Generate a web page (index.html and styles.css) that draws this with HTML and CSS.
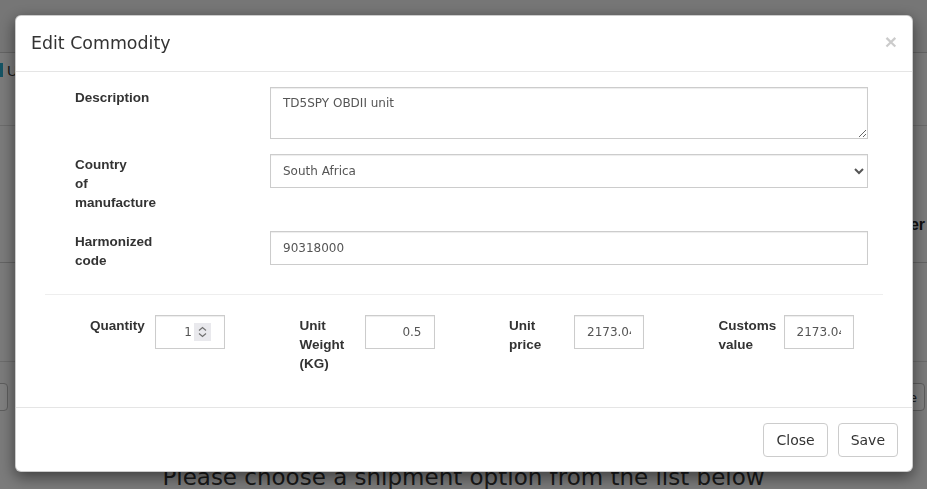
FILE: index.html
```html
<!DOCTYPE html>
<html lang="en">
<head>
<meta charset="utf-8">
<title>Edit Commodity</title>
<link rel="stylesheet" href="styles.css">
</head>
<body>
<div class="page">
  <div class="topbar"></div>
  <div class="toolbar"><span class="tb-mark"></span><span class="tb-text">Upload</span></div>
  <div class="panel"><span class="panel-title">Order Number</span></div>
  <div class="panel2"></div>
  <div class="actions">
    <button class="pbtn pbtn-left" aria-label="Back"></button>
    <button class="pbtn pbtn-right">Continue</button>
  </div>
  <div class="prompt">Please choose a shipment option from the list below</div>
</div>

<div class="overlay">
  <div class="modal">
    <div class="modal-header">
      <h4 class="modal-title">Edit Commodity</h4>
      <button class="close" type="button">×</button>
    </div>
    <div class="modal-body">
      <div class="form">
        <div class="row">
          <label class="lbl">Description</label>
          <textarea class="ctl ctl-area">TD5SPY OBDII unit</textarea>
        </div>
        <div class="row">
          <label class="lbl">Country of manufacture</label>
          <select class="ctl ctl-select"><option>South Africa</option></select>
        </div>
        <div class="row">
          <label class="lbl">Harmonized code</label>
          <input class="ctl" type="text" value="90318000">
        </div>
        <hr class="divider">
        <div class="grid4">
          <div class="group">
            <label class="lbl lbl-sm">Quantity</label>
            <div class="ctl ctl-num ctl-qty">
              <input class="qty-input" type="text" value="1">
              <span class="spin">
                <svg width="17" height="18" viewBox="0 0 17 18"><rect width="17" height="18" fill="#e9e9ed"/><path d="M5 7.5 L8.5 4.5 L12 7.5" fill="none" stroke="#707070" stroke-width="1.2"/><path d="M5 10.5 L8.5 13.5 L12 10.5" fill="none" stroke="#707070" stroke-width="1.2"/></svg>
              </span>
            </div>
          </div>
          <div class="group">
            <label class="lbl lbl-sm">Unit Weight (KG)</label>
            <input class="ctl ctl-num" type="text" value="0.5">
          </div>
          <div class="group">
            <label class="lbl lbl-sm">Unit price</label>
            <input class="ctl ctl-num ctl-over" type="text" value="2173.04">
          </div>
          <div class="group">
            <label class="lbl lbl-sm">Customs value</label>
            <input class="ctl ctl-num ctl-over" type="text" value="2173.04">
          </div>
        </div>
      </div>
    </div>
    <div class="modal-footer">
      <button class="btn" type="button">Close</button>
      <button class="btn" type="button">Save</button>
    </div>
  </div>
</div>
</body>
</html>
```
FILE: styles.css
```css
html, body {
  margin: 0;
  padding: 0;
  height: 100%;
  overflow: hidden;
}
body {
  font-family: "DejaVu Sans", sans-serif;
  background: #f6f6f6;
  color: #333;
}

/* ---------- background page ---------- */
.page {
  width: 927px;
}
.topbar {
  height: 52px;
  background: #ececec;
  border-bottom: 1px solid #c8c8c8;
}
.toolbar {
  height: 73px;
  border-bottom: 1px solid #d8d8d8;
  display: flex;
  align-items: center;
  box-sizing: border-box;
  gap: 4px;
  padding-bottom: 38px;
}
.tb-mark {
  width: 3px;
  height: 14px;
  background: #2aa7c9;
}
.tb-text {
  font-family: "Liberation Sans", sans-serif;
  font-size: 15px;
  color: #333;
}
.panel {
  height: 137px;
  border-bottom: 1px solid #c8c8c8;
  display: flex;
  justify-content: flex-end;
  align-items: center;
  box-sizing: border-box;
  padding-top: 62px;
  padding-right: 2px;
}
.panel-title {
  font-family: "Liberation Sans", sans-serif;
  font-weight: bold;
  font-size: 16px;
  color: #222;
}
.panel2 {
  height: 98px;
  border-bottom: 1px solid #d8d8d8;
}
.actions {
  margin-top: 21px;
  display: flex;
  justify-content: space-between;
}
.pbtn {
  height: 28px;
  font-family: "DejaVu Sans", sans-serif;
  font-size: 13px;
  background: #fff;
  border: 1px solid #bbb;
  border-radius: 4px;
  color: #333;
  padding: 0 7px;
}
.pbtn-left {
  width: 48px;
  margin-left: -40px;
}
.pbtn-right {
  margin-right: 2px;
}
.prompt {
  margin-top: 52px;
  text-align: center;
  font-size: 23px;
  line-height: 28px;
  color: #333;
}

/* ---------- modal ---------- */
.overlay {
  position: fixed;
  inset: 0;
  background: rgba(0, 0, 0, 0.5);
}
.modal {
  margin: 15px 0 0 15px;
  width: 898px;
  box-sizing: border-box;
  background: #fff;
  border: 1px solid rgba(0, 0, 0, 0.2);
  border-radius: 6px;
  box-shadow: 0 5px 15px rgba(0, 0, 0, 0.5);
}
.modal-header {
  display: flex;
  justify-content: space-between;
  align-items: flex-start;
  padding: 15px;
  border-bottom: 1px solid #e5e5e5;
}
.modal-title {
  margin: 0;
  font-weight: normal;
  font-size: 17.4px;
  line-height: 25px;
  color: #333;
}
.close {
  border: 0;
  background: none;
  padding: 0;
  margin-top: 0;
  font-family: "Liberation Sans", sans-serif;
  font-weight: bold;
  font-size: 21px;
  line-height: 21px;
  color: #000;
  opacity: 0.2;
}
.modal-body {
  padding: 15px;
}
.form {
  margin: 0 14px;
}
.row {
  display: grid;
  grid-template-columns: 225px 1fr;
  align-items: start;
  margin-bottom: 15px;
  padding-right: 15px;
}
.lbl {
  font-family: "Liberation Sans", sans-serif;
  font-weight: bold;
  font-size: 13.5px;
  line-height: 19px;
  color: #333;
  padding: 1px 0 4px 30px;
  width: 58px;
}
.ctl {
  box-sizing: border-box;
  height: 34px;
  width: 100%;
  margin: 0;
  padding: 6px 12px;
  font-family: "DejaVu Sans", sans-serif;
  font-size: 12px;
  line-height: 17px;
  color: #555;
  background: #fff;
  border: 1px solid #ccc;
  border-radius: 0;
  box-shadow: inset 0 1px 1px rgba(0, 0, 0, 0.075);
}
.ctl-area {
  height: 52px;
  resize: vertical;
  display: block;
  padding-top: 7px;
}
.ctl-select {
  padding-left: 8px;
}
.divider {
  margin: 20px 0;
  border: 0;
  border-top: 1px solid #eee;
}
.grid4 {
  display: grid;
  grid-template-columns: repeat(4, 209.5px);
  margin-bottom: 15px;
}
.group {
  display: flex;
  align-items: flex-start;
  padding-left: 45px;
}
.lbl-sm {
  padding: 1px 0 4px 0;
  width: 58px;
  margin-right: 7px;
  flex: none;
}
.ctl-num {
  width: 70px;
  flex: none;
  text-align: right;
}
.ctl-over {
  text-align: left;
}
.ctl-qty {
  display: flex;
  align-items: center;
  padding: 0 13px 0 6px;
}
.qty-input {
  flex: 1;
  width: 0;
  border: 0;
  padding: 0 2px 0 0;
  margin: 0;
  text-align: right;
  font-family: "DejaVu Sans", sans-serif;
  font-size: 12px;
  color: #555;
  background: transparent;
  outline: none;
}
.spin {
  display: flex;
  width: 17px;
  height: 18px;
}
.modal-footer {
  display: flex;
  justify-content: flex-end;
  gap: 10px;
  padding: 15px 14px 14px 15px;
  border-top: 1px solid #e5e5e5;
}
.btn {
  height: 34px;
  padding: 6px 12px;
  font-family: "DejaVu Sans", sans-serif;
  font-size: 14px;
  line-height: 20px;
  color: #333;
  background: #fff;
  border: 1px solid #ccc;
  border-radius: 4px;
}
```
